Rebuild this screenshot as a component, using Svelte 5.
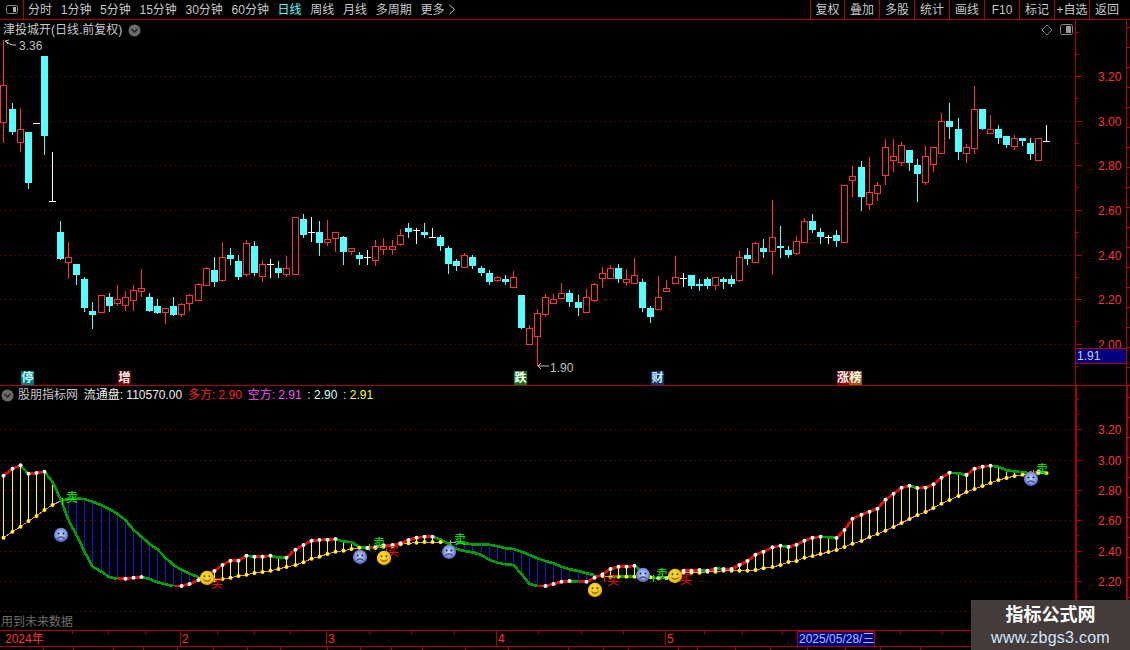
<script>
  const leftMenu = [
    { t: '分时' }, { t: '1分钟' }, { t: '5分钟' }, { t: '15分钟' }, { t: '30分钟' }, { t: '60分钟' },
    { t: '日线', on: true }, { t: '周线' }, { t: '月线' }, { t: '多周期' }, { t: '更多', more: true }
  ];
  const rightMenu = ['复权', '叠加', '多股', '统计', '画线', 'F10', '标记', '+自选', '返回'];

  const px = (i) => Math.round(3.49 + 8.085 * i);

  const raw = [
    ['r',85.3,121.7,40,142.7],['c',109,132,103.3,134],['r',129.3,141.7,108.3,151.7],['c',132,183,132,187.7],
    ['w',123.3,123.3,123.3,123.3],['c',56,136,56,154],['w',201.3,201.3,152,201.3],['c',232,259,221,259],
    ['r',257.3,261.7,242,279],['c',264,275,264,284],['c',279,308,277,311],['c',311,315,302,328],
    ['r',295.3,312,294.7,313],['c',297,306,293,311],['r',299.3,303,285,306],['r',297,305,291,311],
    ['r',290,300,285,311],['r',288,290.7,269,297],['c',297,311,293,311],['c',306,313,299,313],
    ['r',308,312,308,324],['c',306,315,297,315],['r',304,314,303,317],['r',295.3,303,294,311],
    ['r',284,300,283,300],['r',268,285,267,285],['c',270,282,257,286],['r',257,280,242,282],
    ['c',255,259,248,264],['c',261,277,255,279],['r',243,274,240,277],['c',246,273,241,275],
    ['r',264,276,260,282],['w',264,264,259,277],['c',268,273,261,277],['r',268,274,256,277],
    ['r',217,274,217,275],['c',219,235,214,237],['w',232.3,232.3,217,241],['c',232,243,221,255],
    ['r',239.3,242,220,246],['r',232.3,237.7,232,252],['c',237,252,236,264],['r',248.3,251,248,255],
    ['c',255,259,252,264],['w',257.3,257.3,250,264],['r',246.3,260,240,266],['r',246.3,249,238,255],
    ['r',246.3,249,240,255],['r',235.3,244,229,246],['c',228,232,223,237],['w',230,230,228,243],
    ['c',232,235,223,237],['w',237.3,237.3,228,237.3],['c',237,246,235,250],['c',248,264,246,273],
    ['c',261,266,259,270],['r',255.3,267,253,268],['c',257,266,255,268],['c',268,273,266,275],
    ['c',273,282,270,284],['r',277.3,280,276,282],['c',279,282,275,284],['r',277.3,286.7,271,287],
    ['c',295,328,295,328],['r',328.3,344.3,325,344.3],['r',313.3,335.7,309,366],['r',297.3,313.7,294,317],
    ['r',299.3,302.7,294,304],['r',293.3,297.7,283,298],['c',293,302,290,306],['c',302,308,295,315],
    ['r',297.3,311.7,289,312],['r',284.3,300,283,302],['r',273.3,277.7,267,288],['r',268.3,277.7,265,278],
    ['c',268,279,264,282],['r',279.3,282.3,269,286],['r',275.3,282.7,258,284],['c',282,308,279,311],
    ['c',308,317,306,322],['r',297.3,308.7,276,309],['r',288.3,290.7,280,291],['r',277.3,282.7,256,283],
    ['w',278,278,273,286],['c',275,286,275,288],['c',284,286,279,290],['c',279,286,277,288],
    ['r',277.3,285,277,290],['c',279,282,277,288],['c',279,284,275,286],['r',257.3,280,251,282],
    ['c',255,259,248,264],['r',243.3,262,242,262],['c',248,252,239,257],['r',237.3,250.7,200,275],
    ['c',246,248,226,257],['c',250,255,246,257],['r',241.3,252.7,236,255],['r',221.3,241.7,218,243],
    ['c',221,230,214,232],['c',232,237,228,243],['w',237.3,237.3,235,243],['c',235,241,230,246],
    ['r',185.3,241.7,185.3,241.7],['r',176.3,179.7,166,197],['c',167,197,161,210],['r',192.3,203.7,157,210],
    ['r',185.3,192.7,182,201],['r',147.3,174.7,139,185],['r',156.3,159.7,139,172],['r',145.3,161.7,142,166],
    ['c',150,163,150,170],['c',165,174,159,201],['r',156.3,181.7,146,185],['r',147.3,163.7,147,172],
    ['r',121.3,152.7,113,153],['c',121,127,103,138],['c',129,152,118,159],['r',147.3,152.7,144,163],
    ['r',109.3,147.7,86,154],['c',109,129,109,129],['r',129.3,132.7,115,134],['c',129,138,125,143],
    ['c',136,145,136,147],['r',138.3,145.7,135,150],['c',138,141,138,145],['c',143,154,138,159],
    ['r',138.3,159.7,138.3,159.7],['w',141.3,141.3,125,141.3]
  ];
  const candles = raw.map((c, i) => ({ k: c[0], top: Math.round(c[1]), bot: Math.round(c[2]), wt: Math.round(c[3]), wb: Math.round(c[4]), p: px(i) }));

  const mainLevels = [
    { y: 76, l: '3.20' }, { y: 121, l: '3.00' }, { y: 165, l: '2.80' }, { y: 210, l: '2.60' },
    { y: 255, l: '2.40' }, { y: 299, l: '2.20' }, { y: 344, l: '2.00' }
  ];
  const subLevels = [
    { y: 429, l: '3.20' }, { y: 460, l: '3.00' }, { y: 490, l: '2.80' }, { y: 520, l: '2.60' }, { y: 551, l: '2.40' }, { y: 581, l: '2.20' }, { y: 611, l: '' }
  ];
  const minorOf = (lv) => lv.slice(0, -1).map((m, i) => (m.y + lv[i + 1].y) / 2 | 0);
  const mainMinor = [54, 32, ...minorOf(mainLevels), 366];
  const subMinor = [414, 399, ...minorOf(subLevels)];
  const rightTicks = Array.from({ length: 18 }, (_, i) => 27 + i * 20);
  const rightTicksSub = Array.from({ length: 12 }, (_, i) => 397 + i * 20);

  const tags = [
    { x: 21, w: 13, t: '停', bg: '#007a80', c: '#bffcff' },
    { x: 118, w: 13, t: '增', bg: '#800000', c: '#ffffff' },
    { x: 514, w: 13, t: '跌', bg: '#007a10', c: '#ffffff' },
    { x: 651, w: 13, t: '财', bg: '#003a70', c: '#cfe8ff' },
    { x: 837, w: 12, t: '涨', bg: '#8a0000', c: '#ffffff' },
    { x: 849, w: 13, t: '榜', bg: '#9a5a10', c: '#ffffff' }
  ];

  const l1 = [
    475.7,468.7,465.3,473.7,473,471.7,481.7,499,
    520,535,551.7,566.7,571.7,577.3,578.7,578.7,577.7,577,579,582.3,584.3,586,586,584,580,
    575,571,565,560.7,560.7,555.7,556.7,556.7,555.7,557.7,557.8,549.7,545,540.7,540,539.7,539,541.7,542,547.3,548,547.3,545.3,545,543.3,540,537.7,536.7,536.7,539.3,544,
    549,551,552.3,555,560,562.7,564.3,565,574,584,586,586,584,581.7,581,581.7,581.7,577.7,
    574.3,569,566.7,566.7,565.7,571.7,577.3,578.3,578,575,570.7,570.7,570,570.7,568.7,569,569,565,561,554.7,
    551.7,547.3,545.7,547,544.7,540.7,537.7,536.7,537.3,538,530,518.7,514.7,511.7,508.7,499.7,493.7,487.7,485.7,488,487.7,484.3,477.7,472.7,473.3,475,468.7,466.7,465.7,466.7,470.3,471.3,472.3,473.3,471.7,472.3
  ];
  const l2 = [
    537.7,531.7,526.7,521,516,510,505,501,
    499,498.7,499,501.7,505.3,509,514,520,529.7,536.7,544,549.3,557.7,565,570,573.7,577,
    581,580,579,577.7,576,574.7,573,572,570.7,569,567,565,562.3,558.7,556.7,554,551.7,550.7,549,547.7,548,548,546.7,546,544.3,543.3,542.7,542,542,542,542.5,
    542.7,543.3,544.3,544.7,544.7,546.3,548.3,549,551.7,555,558.3,561,563.3,566.7,569.3,571,573.3,575,
    576,576.7,576.7,576.7,576.7,576.7,577.3,578.3,578,575,572.7,572.7,572.7,571.7,571.7,570.7,570.7,570.7,570.7,570,
    568.3,567,565,562,561,557.7,556,554,552,550,547,543.7,541,537,534,530.7,527,523,519,515,512,508,503.7,500,496,492,489,486,483,480,478,476,474.7,474.3,473.3,473.3
  ];
  const isBlue = (i) => (i >= 8 && i <= 24) || (i >= 56 && i <= 73);
  const isYellow = (i) => (i >= 0 && i <= 6) || (i >= 25 && i <= 54) || i >= 74;
  const sx = (i) => px(i) + 0.5;

  const rising = (i) => i > 0 && l1[i] <= l1[i - 1];
  const segs1 = l1.slice(1).map((y, k) => ({
    x1: sx(k), y1: l1[k], x2: sx(k + 1), y2: y, red: rising(k + 1)
  }));
  const segs2 = l2.slice(1).map((y, k) => ({
    x1: sx(k), y1: l2[k], x2: sx(k + 1), y2: y,
    thick: (isBlue(k) && isBlue(k + 1)) || (k >= 75 && k < 79) || k === 7
  }));
  const bars = l1.map((y, i) => ({ x: sx(i), y1: y, y2: l2[i], i })).filter((b) => isBlue(b.i) || isYellow(b.i));
  const whiteDots = l1.map((y, i) => ({ x: sx(i), y, i })).filter((d) => rising(d.i) || (d.i === 0) || (!isBlue(d.i) && rising(d.i + 1)));
  const yellowDots = l2.map((y, i) => ({ x: sx(i), y, i })).filter((d) => isYellow(d.i));

  const smiles = [[207, 578], [384, 558], [595, 590], [675, 576]];
  const sads = [[61, 535], [360, 557], [449, 552], [643, 575], [1031, 479]];
  const sells = [[62, 72, 497], [369, 379, 543], [450, 460, 539], [653, 662, 574], [1033, 1042, 469]];
  const buys = [[208, 217, 583], [386, 393, 551], [604, 613, 580], [678, 686, 579]];

  const axisTop = [72, 108, 145, 217, 254, 290, 369, 411, 454, 538, 581, 623, 704, 742, 782, 900, 942];
  const axisBottom = [43, 73, 113, 143, 177, 213, 247, 280, 327, 360, 391, 422, 465, 508, 568, 603, 628, 678, 697, 735, 770, 807, 845, 880, 920];
  const axisMarks = [{ x: 180, t: '2' }, { x: 326, t: '3' }, { x: 496, t: '4' }, { x: 665, t: '5' }];
</script>

<div class="screen">
  <header class="topbar">
    <div class="toggle">
      <svg width="14" height="11" viewBox="0 0 14 11"><rect x="1.5" y="1.5" width="11" height="8" rx="2" fill="none" stroke="#8a8a8a" /><rect x="8" y="3" width="3" height="5" fill="#b0b0b0" /></svg>
    </div>
    <nav class="left-menu">
      {#each leftMenu as m}
        <span class:on={m.on}>{m.t}{#if m.more}<svg class="more" width="8" height="11" viewBox="0 0 8 11"><path d="M1.5 1l5 4.5-5 4.5" fill="none" stroke="#c8c8c8" /></svg>{/if}</span>
      {/each}
    </nav>
    <nav class="right-menu">
      {#each rightMenu as m}
        <span>{m}</span>
      {/each}
    </nav>
  </header>

  <section class="panel main-panel">
    <div class="title">
      <span>津投城开(日线.前复权)</span>
      <svg class="chev" width="13" height="13" viewBox="0 0 13 13"><circle cx="6.5" cy="6.5" r="6" fill="#6a6a6a" /><path d="M3.5 5l3 3 3-3" fill="none" stroke="#222" stroke-width="1.4" /></svg>
    </div>
    <svg class="chart" width="1075" height="365" viewBox="0 20 1075 365">
      {#each mainLevels as g}
        <line class="grid" x1="0" x2="1075" y1={g.y + 0.5} y2={g.y + 0.5} />
      {/each}
      <g shape-rendering="crispEdges">
        {#each candles as c}
          {#if c.k === 'c'}
            <rect class="up-wick" x={c.p} y={c.wt} width="1" height={c.wb - c.wt + 1} />
            <rect class="cyan" x={c.p - 3} y={c.top} width="7" height={c.bot - c.top} />
          {:else if c.k === 'r'}
            {#if c.top > c.wt}<rect class="red" x={c.p} y={c.wt} width="1" height={c.top - c.wt} />{/if}
            {#if c.wb > c.bot}<rect class="red" x={c.p} y={c.bot} width="1" height={c.wb - c.bot} />{/if}
            <rect class="hollow" x={c.p - 2.5} y={c.top + 0.5} width="6" height={c.bot - c.top} />
          {:else}
            <rect class="white" x={c.p} y={c.wt} width="1" height={c.wb - c.wt + 1} />
            <rect class="white" x={c.p - 3} y={c.top} width="7" height="1" />
          {/if}
        {/each}
      </g>
      <path class="arrow" d="M5 41l3 3M5 41l4-1M5 41l5 3 3 1 3 0" />
      <text class="price" x="19" y="50">3.36</text>
      <path class="arrow" d="M538 366h11M538 366l3-3M538 366l3 3" />
      <text class="price" x="550" y="372">1.90</text>
      {#each tags as t}
        <rect x={t.x} y="371" width={t.w} height="14" fill={t.bg} />
        <text class="tag" x={t.x + t.w / 2} y="382" fill={t.c}>{t.t}</text>
      {/each}
      <svg x="1041" y="24" width="12" height="12" viewBox="0 0 12 12"><path d="M6 1l5 5-5 5-5-5z" fill="none" stroke="#808080" /></svg>
      <svg x="1060" y="24" width="13" height="12" viewBox="0 0 13 12"><rect x="0.5" y="0.5" width="12" height="10" rx="2" fill="none" stroke="#8a8a8a" /><rect x="6" y="2" width="5" height="7" fill="#9a9a9a" /></svg>
    </svg>
    <svg class="axis" width="55" height="365" viewBox="1075 20 55 365">
      <line class="vline" x1="1075.5" x2="1075.5" y1="20" y2="385" />
      <line class="vline" x1="1126.5" x2="1126.5" y1="20" y2="385" />
      {#each mainLevels as g}
        <line class="vline" x1="1075" x2="1082" y1={g.y + 0.5} y2={g.y + 0.5} />
        <text class="scale" x="1098" y={g.y + 5}>{g.l}</text>
      {/each}
      {#each mainMinor as y}
        <line class="vline" x1="1075" x2="1079" y1={y + 0.5} y2={y + 0.5} />
      {/each}
      {#each rightTicks as y}
        <line class="vline" x1="1126" x2="1130" y1={y + 0.5} y2={y + 0.5} />
      {/each}
      <rect class="price-box" x="1075.5" y="348.5" width="51" height="15" />
      <text class="box-text" x="1077" y="360">1.91</text>
    </svg>
  </section>

  <section class="panel sub-panel">
    <div class="info">
      <svg class="chev" width="13" height="13" viewBox="0 0 13 13"><circle cx="6.5" cy="6.5" r="6" fill="#6a6a6a" /><path d="M3.5 5l3 3 3-3" fill="none" stroke="#222" stroke-width="1.4" /></svg>
      <span class="grey">股朋指标网</span>
      <span class="bright">流通盘: 110570.00</span>
      <span class="rd">多方: 2.90</span>
      <span class="mg">空方: 2.91</span>
      <span class="lt">: 2.90</span>
      <span class="yl">: 2.91</span>
    </div>
    <div class="note">用到未来数据</div>
    <svg class="chart" width="1075" height="244" viewBox="0 386 1075 244">
      <defs>
        <radialGradient id="sun" cx="0.45" cy="0.4" r="0.65">
          <stop offset="0" stop-color="#ffe030" /><stop offset="0.75" stop-color="#f0c010" /><stop offset="1" stop-color="#a87800" />
        </radialGradient>
        <radialGradient id="moon" cx="0.5" cy="0.45" r="0.6">
          <stop offset="0" stop-color="#ccd6ff" /><stop offset="0.6" stop-color="#8496e4" /><stop offset="1" stop-color="#2c3c9c" />
        </radialGradient>
      </defs>
      {#each subLevels as g}
        <line class="grid" x1="0" x2="1075" y1={g.y + 0.5} y2={g.y + 0.5} />
      {/each}
      <g shape-rendering="crispEdges">
        {#each bars as b}
          <line class={isBlue(b.i) ? 'bar-blue' : 'bar-yellow'} x1={b.x} x2={b.x} y1={b.y1} y2={b.y2} />
        {/each}
        {#each segs2 as s}
          <line class={s.thick ? 'thick-green' : 'pink'} x1={s.x1} y1={s.y1} x2={s.x2} y2={s.y2} />
        {/each}
        {#each segs1 as s}
          <line class={s.red ? 'thick-red' : 'thick-green'} x1={s.x1} y1={s.y1} x2={s.x2} y2={s.y2} />
        {/each}
      </g>
      {#each yellowDots as d}
        <circle class="dot-y" cx={d.x} cy={d.y} r="2" />
      {/each}
      {#each whiteDots as d}
        <circle class="dot-w" cx={d.x} cy={d.y} r="2" />
      {/each}
      {#each sells as s}
        <line class="sell-bar" x1={s[0] + 0.5} x2={s[0] + 0.5} y1={s[2] + 1} y2={s[2] + 8} />
        <text class="sell" x={s[1]} y={s[2] + 5}>卖</text>
      {/each}
      {#each buys as s}
        <line class="buy-bar" x1={s[0] + 0.5} x2={s[0] + 0.5} y1={s[2] - 6} y2={s[2] + 2} />
        <text class="buy" x={s[1]} y={s[2] + 5}>买</text>
      {/each}
      {#each smiles as f}
        <g transform="translate({f[0]} {f[1]})">
          <circle r="7.2" fill="url(#sun)" />
          <circle cx="-2.4" cy="-1.8" r="1" fill="#5a3c00" /><circle cx="2.4" cy="-1.8" r="1" fill="#5a3c00" />
          <path d="M-3.5 1.4q3.5 3.6 7 0" fill="none" stroke="#5a3c00" stroke-width="1" />
        </g>
      {/each}
      {#each sads as f}
        <g transform="translate({f[0]} {f[1]})">
          <circle r="7.2" fill="url(#moon)" />
          <circle cx="-2.4" cy="-1.6" r="1" fill="#20264a" /><circle cx="2.4" cy="-1.6" r="1" fill="#20264a" />
          <path d="M-3.5 3.6q3.5 -3.4 7 0" fill="none" stroke="#20264a" stroke-width="1" />
        </g>
      {/each}
    </svg>
    <svg class="axis" width="55" height="244" viewBox="1075 386 55 244">
      <line class="vline thick" x1="1076" x2="1076" y1="386" y2="630" />
      <line class="vline thick" x1="1127" x2="1127" y1="386" y2="630" />
      {#each subLevels as g}
        <line class="vline" x1="1075" x2="1082" y1={g.y + 0.5} y2={g.y + 0.5} />
        <text class="scale" x="1098" y={g.y + 5}>{g.l}</text>
      {/each}
      {#each subMinor as y}
        <line class="vline" x1="1075" x2="1079" y1={y + 0.5} y2={y + 0.5} />
      {/each}
      {#each rightTicksSub as y}
        <line class="vline" x1="1126" x2="1130" y1={y + 0.5} y2={y + 0.5} />
      {/each}
    </svg>
  </section>

  <footer class="date-axis">
    <svg width="1130" height="20" viewBox="0 630 1130 20">
      <line class="vline" x1="0" x2="1130" y1="630.5" y2="630.5" />
      <line class="vline" x1="0" x2="1130" y1="646.5" y2="646.5" />
      <text class="axis-date" x="5" y="643">2024年</text>
      {#each axisMarks as m}
        <line class="vline" x1={m.x + 0.5} x2={m.x + 0.5} y1="630" y2="646" />
        <text class="axis-date" x={m.x + 2} y="643">{m.t}</text>
      {/each}
      {#each axisTop as x}
        <line class="vline" x1={x + 0.5} x2={x + 0.5} y1="630" y2="634" />
      {/each}
      {#each axisBottom as x}
        <line class="vline" x1={x + 0.5} x2={x + 0.5} y1="646" y2="650" />
      {/each}
      <rect class="date-box" x="797.5" y="631.5" width="77" height="15" />
      <text class="date-text" x="799" y="643">2025/05/28/三</text>
    </svg>
  </footer>

  <aside class="watermark">
    <strong>指标公式网</strong>
    <span>www.zbgs3.com</span>
  </aside>
</div>

<style>
  :global(body) {
    margin: 0;
    background: #000;
  }
  .screen {
    position: relative;
    width: 1130px;
    height: 650px;
    overflow: hidden;
    background: #000;
    color: #c8c8c8;
    font-family: "Liberation Sans", "Noto Sans CJK SC", sans-serif;
    font-size: 12px;
    display: flex;
    flex-direction: column;
  }
  .topbar {
    height: 19px;
    flex: none;
    display: flex;
    align-items: stretch;
    border-bottom: 1px solid #b00000;
    line-height: 21px;
  }
  .toggle {
    width: 23px;
    border-right: 1px solid #b00000;
    display: flex;
    align-items: center;
    justify-content: center;
    box-sizing: content-box;
  }
  .left-menu {
    display: flex;
    gap: 8.7px;
    padding-left: 4px;
  }
  .left-menu .on {
    color: #54ffff;
  }
  .more {
    margin-left: 4px;
    vertical-align: -1px;
  }
  .right-menu {
    margin-left: auto;
    display: flex;
  }
  .right-menu span {
    width: 35px;
    box-sizing: border-box;
    text-align: center;
    border-left: 1px solid #b00000;
    white-space: nowrap;
  }
  .right-menu span:last-child {
    width: 41px;
    padding-right: 6px;
  }
  .right-menu span:first-child {
    width: 34px;
  }
  .panel {
    position: relative;
    display: flex;
    flex: none;
  }
  .main-panel {
    height: 365px;
    border-bottom: 1px solid #b00000;
  }
  .sub-panel {
    height: 244px;
  }
  .chart,
  .axis {
    display: block;
    flex: none;
  }
  .title {
    position: absolute;
    left: 3px;
    top: 2px;
    height: 16px;
    display: flex;
    align-items: center;
    gap: 6px;
    line-height: 16px;
  }
  .info {
    position: absolute;
    left: 1px;
    top: 1px;
    height: 16px;
    display: flex;
    align-items: center;
    gap: 5.7px;
    line-height: 16px;
    white-space: pre;
  }
  .info .chev {
    margin-right: -1.7px;
  }
  .bright { color: #f0f0f0; }
  .rd { color: #ff2020; }
  .mg { color: #ff50ff; }
  .lt { color: #d8ffff; }
  .yl { color: #ffff30; }
  .note {
    position: absolute;
    left: 1px;
    top: 228px;
    color: #6e6e6e;
    line-height: 16px;
  }
  .grid {
    stroke: #900000;
    stroke-width: 1;
    stroke-dasharray: 1 4;
  }
  .red { fill: #ff3232; }
  .up-wick, .cyan { fill: #54ffff; }
  .white { fill: #ffffff; }
  .hollow { fill: #000; stroke: #ff3232; stroke-width: 1; }
  .arrow { fill: none; stroke: #c0c0c0; stroke-width: 1; }
  .price { fill: #c0c0c0; font-size: 12px; }
  .tag {
    font-size: 12px;
    text-anchor: middle;
    font-weight: 700;
  }
  .vline { stroke: #b00000; stroke-width: 1; }
  .vline.thick { stroke-width: 2; }
  .scale { fill: #ff3232; font-size: 12px; }
  .price-box { fill: #000080; stroke: #b00000; stroke-width: 1; }
  .box-text { fill: #c8d0ff; font-size: 12px; }
  .bar-blue { stroke: #1010ff; stroke-width: 1; }
  .bar-yellow { stroke: #ffff00; stroke-width: 1; }
  .pink { stroke: #ff66ff; stroke-width: 1; }
  .thick-green { stroke: #00a000; stroke-width: 2.7; }
  .thick-red { stroke: #ff0000; stroke-width: 2.7; }
  .dot-y { fill: #ffff00; }
  .dot-w { fill: #e4ffff; }
  .sell { fill: #00ff00; font-size: 12px; text-anchor: middle; }
  .sell-bar { stroke: #00ff00; stroke-width: 1; }
  .buy { fill: #ff1010; font-size: 12px; text-anchor: middle; }
  .buy-bar { stroke: #ff1010; stroke-width: 1; }
  .date-axis {
    height: 20px;
    flex: none;
  }
  .date-axis svg { display: block; }
  .axis-date { fill: #ff3232; font-size: 12px; }
  .date-box { fill: #000080; stroke: #b00000; stroke-width: 1; }
  .date-text { fill: #a8c4ff; font-size: 12px; }
  .watermark {
    position: absolute;
    right: 0;
    bottom: 0;
    width: 159px;
    height: 50px;
    background: #443c3a;
    display: flex;
    flex-direction: column;
    align-items: center;
    justify-content: center;
  }
  .watermark strong {
    color: #fff;
    font-size: 18px;
    line-height: 26px;
  }
  .watermark span {
    color: #d4e6ff;
    font-size: 16px;
    line-height: 20px;
    letter-spacing: 0.25px;
  }
</style>
